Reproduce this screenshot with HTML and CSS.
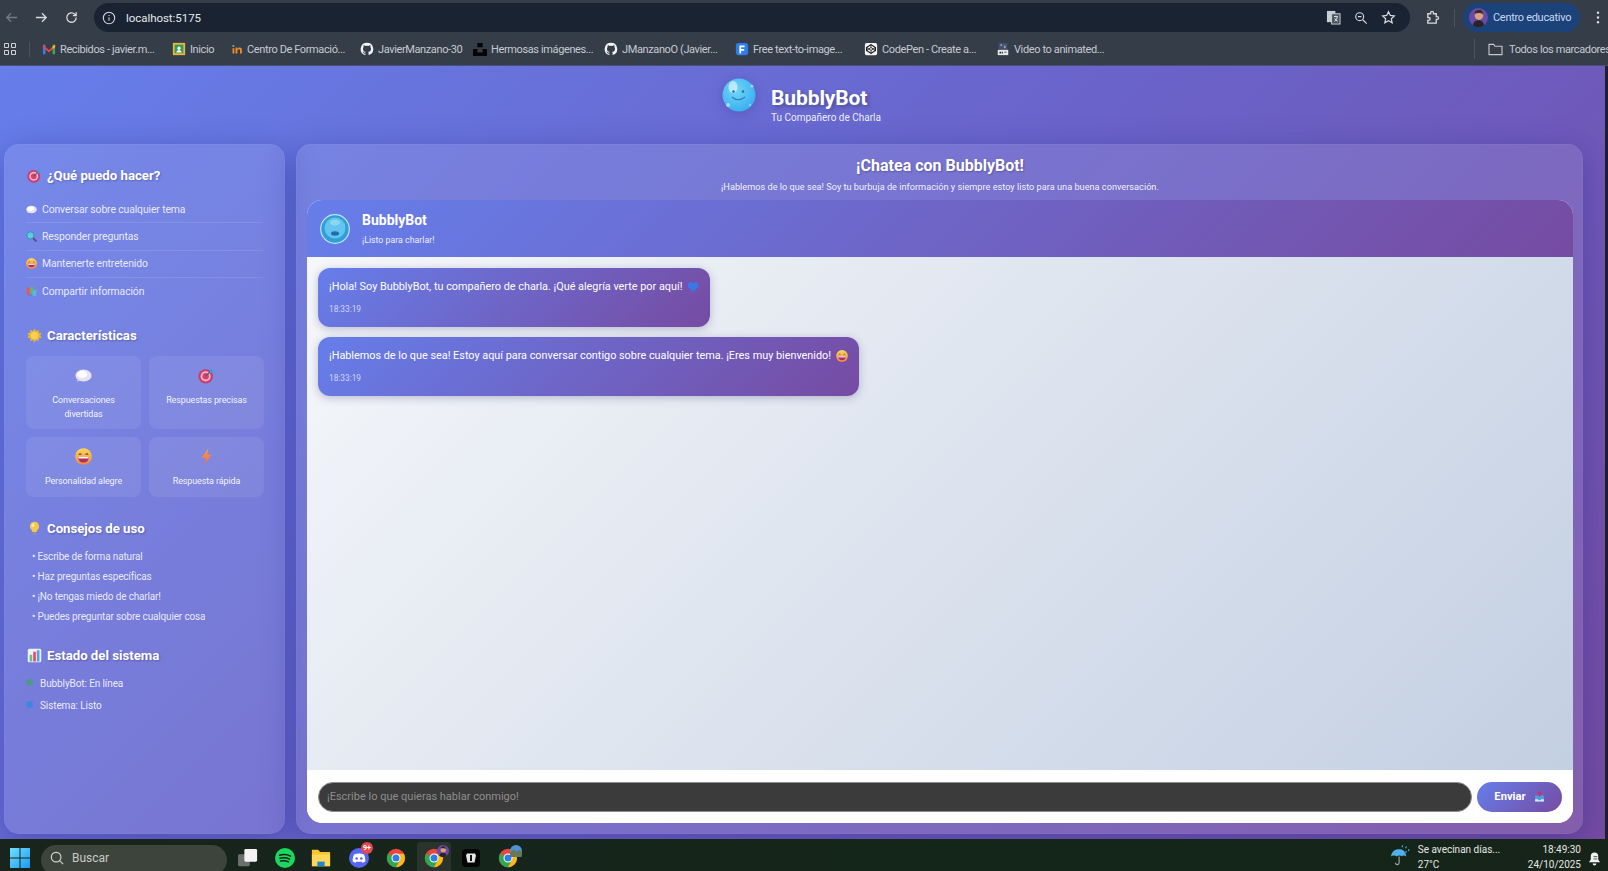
FILE: index.html
```html
<!DOCTYPE html>
<html lang="es">
<head>
<meta charset="utf-8">
<title>BubblyBot</title>
<link rel="stylesheet" href="styles.css">
</head>
<body>
<svg class="defs" width="0" height="0" aria-hidden="true">
  <defs>
    <radialGradient id="gBubble" cx="40%" cy="35%" r="70%"><stop offset="0" stop-color="#74d6f7"/><stop offset="1" stop-color="#35aef0"/></radialGradient>
    <linearGradient id="gFace" x1="0" y1="0" x2="0" y2="1"><stop offset="0" stop-color="#fbd75a"/><stop offset="1" stop-color="#f08a3c"/></linearGradient>
    <linearGradient id="gBolt" x1="0" y1="0" x2="0" y2="1"><stop offset="0" stop-color="#f9a04a"/><stop offset="1" stop-color="#ee6a4a"/></linearGradient>
    <linearGradient id="gWin" x1="0" y1="0" x2="1" y2="1"><stop offset="0" stop-color="#6fe0ff"/><stop offset="1" stop-color="#1b9af0"/></linearGradient>
    <symbol id="target" viewBox="0 0 20 20"><circle cx="9" cy="11" r="8.500" fill="#cf3a68"/><circle cx="9" cy="11" r="6" fill="#f0b4c8"/><circle cx="9" cy="11" r="3.800" fill="#d9406c"/><path d="M9 11 16 4" stroke="#35618f" stroke-width="1.400"/><path d="M15 1l1 3 3.500-.2-2.800 3.200-3-.6z" fill="#35a4e8"/></symbol>
    <symbol id="speech" viewBox="0 0 20 20"><ellipse cx="10" cy="10" rx="9.500" ry="7" fill="#e9e1f2"/><ellipse cx="8.500" cy="8.500" rx="6" ry="4" fill="#fff"/><path d="M4 14l-2 3 5-1.500z" fill="#d9d0ea"/></symbol>
    <symbol id="lens" viewBox="0 0 20 20"><path d="M12 12l6 6" stroke="#6b3f80" stroke-width="3.400" stroke-linecap="round"/><circle cx="8" cy="8" r="6.500" fill="#53cfe0" stroke="#3d7fa8" stroke-width="1.400"/></symbol>
    <symbol id="smile" viewBox="0 0 20 20"><circle cx="10" cy="10" r="9.800" fill="url(#gFace)"/><path d="M4.500 8q1.500-2.500 3 0M12.500 8q1.500-2.500 3 0" fill="none" stroke="#6b3a2a" stroke-width="1.200"/><path d="M3.500 10.500h13q-.5 6.500-6.500 6.500t-6.500-6.500z" fill="#b52a6a"/><path d="M4 10.500h12v1.800H4z" fill="#fff"/></symbol>
    <symbol id="books" viewBox="0 0 20 20"><path d="M1 3h8v13H1z" fill="#e0566f"/><path d="M7 2h7v13H7z" fill="#64b56a"/><path d="M12 7h7v11h-7z" fill="#5ab4e0"/><path d="M3 15h8v3H3z" fill="#6b7fd0"/></symbol>
    <symbol id="star" viewBox="0 0 20 20"><path d="M10 .5l2 3.500 3.500-1.500.3 3.700 3.700.8-1.900 3 1.900 3-3.700.8-.3 3.700L12 16l-2 3.500L8 16l-3.500 1.500-.3-3.700-3.700-.8 1.900-3-1.900-3 3.700-.8.3-3.700L8 4z" fill="#e8b23c"/><circle cx="10" cy="10" r="5" fill="#f6d250"/></symbol>
    <symbol id="bulb" viewBox="0 0 20 20"><path d="M10 1a6 6 0 0 0-4 10.500c1 1 1.300 2 1.300 3h5.400c0-1 .3-2 1.300-3A6 6 0 0 0 10 1z" fill="#f7c84a"/><path d="M7.500 15h5v2.500a1 1 0 0 1-1 1h-3a1 1 0 0 1-1-1z" fill="#8d8fa8"/><ellipse cx="8" cy="5.500" rx="2" ry="2.500" fill="#fde9a0"/></symbol>
    <symbol id="chart" viewBox="0 0 20 20"><rect x="1" y="1" width="18" height="18" rx="2" fill="#eef1f7"/><rect x="3.500" y="9" width="3.500" height="9" fill="#63c77a"/><rect x="8.300" y="5" width="3.500" height="13" fill="#e8476f"/><rect x="13.100" y="3" width="3.500" height="15" fill="#4aa3e8"/></symbol>
    <symbol id="bolt" viewBox="0 0 20 20"><path d="M12 .5 4 11.500h5L7.500 19.500 16 8h-5z" fill="url(#gBolt)"/></symbol>
    <symbol id="heart" viewBox="0 0 20 20"><path d="M10 18C4 13.500 1 10.500 1 6.800 1 3.800 3.300 2 5.700 2 7.500 2 9 3 10 4.500 11 3 12.500 2 14.300 2 16.700 2 19 3.800 19 6.800c0 3.700-3 6.700-9 11.200z" fill="#3a78e6"/></symbol>
    <symbol id="outbox" viewBox="0 0 20 20"><path d="M2 8h16v11H2z" fill="#4f9fe0"/><path d="M2 15h5l1 2h4l1-2h5v4H2z" fill="#dfe8f4"/><path d="M10 0l4.500 4.500h-3V10h-3V4.500h-3z" fill="#d9285f"/></symbol>
    <symbol id="ghub" viewBox="0 0 20 20"><path fill="#f2f4f7" d="M10 1a9 9 0 0 0-2.850 17.540c.45.08.62-.2.62-.43v-1.600c-2.500.55-3.030-1.200-3.030-1.200-.41-1.040-1-1.320-1-1.320-.82-.56.06-.55.06-.55.9.06 1.380.93 1.380.93.8 1.380 2.100.98 2.620.75.08-.58.31-.98.570-1.200-2-.23-4.100-1-4.100-4.450 0-.98.35-1.780.93-2.410-.1-.23-.4-1.150.08-2.380 0 0 .76-.24 2.480.92a8.600 8.600 0 0 1 4.500 0c1.720-1.160 2.480-.92 2.480-.92.49 1.230.18 2.150.09 2.380.58.630.92 1.430.92 2.410 0 3.460-2.100 4.220-4.110 4.440.32.280.61.830.61 1.670v2.480c0 .24.160.520.620.430A9 9 0 0 0 10 1z"/></symbol>
    <symbol id="chrome" viewBox="0 0 24 24"><circle cx="12" cy="12" r="11" fill="#e8453c"/><path d="M12 12 2.500 6.500A11 11 0 0 0 12 23l5.500-9.500z" fill="#2fa84f"/><path d="M12 7h9.500A11 11 0 0 1 12 23l5-9z" fill="#f9bc15"/><circle cx="12" cy="12" r="5.400" fill="#fff"/><circle cx="12" cy="12" r="4.200" fill="#2f7de8"/></symbol>
    <symbol id="avatar" viewBox="0 0 20 20"><circle cx="10" cy="10" r="10" fill="#6c49a8"/><circle cx="10.500" cy="8" r="4.500" fill="#d9a27e"/><path d="M6 6c0-3 2.500-4 5-4s4 2 3.500 5C13 5 9 5 6 6z" fill="#3a2a22"/><path d="M4 18c1-4 4-5 6-5s5 1 6 5a10 10 0 0 1-12 0z" fill="#2a2326"/></symbol>
  </defs>
</svg>

<header class="toolbar">
  <svg class="tb-icon dim" viewBox="0 0 16 16"><path d="M14 8H3M7.500 3.500 3 8l4.500 4.500"/></svg>
  <svg class="tb-icon" viewBox="0 0 16 16"><path d="M2 8h11M8.500 3.500 13 8l-4.500 4.500"/></svg>
  <svg class="tb-icon" viewBox="0 0 16 16"><path d="M13 8a5 5 0 1 1-1.500-3.500L13 6M13 2.500V6H9.500"/></svg>
  <div class="omnibox">
    <svg class="info" viewBox="0 0 16 16"><circle cx="8" cy="8" r="6.500"/><path d="M8 7.200v4M8 4.500v1.200"/></svg>
    <span class="url">localhost:5175</span>
    <svg class="translate" viewBox="0 0 16 16"><rect x="1" y="1" width="9" height="12" fill="#c9ced6"/><rect x="6" y="4" width="9" height="11" fill="#4b535e" stroke="#c9ced6"/><path d="M8.500 7h4M10.500 6v1M9 12c2-1 3-3 3-5M9.500 9c.5 1.500 1.500 2.500 3 3" stroke="#e5e8ec" fill="none"/></svg>
    <svg class="omni-icon" viewBox="0 0 16 16"><circle cx="6.500" cy="6.500" r="4.500"/><path d="M10 10l4.500 4.500M4.500 6.500h4"/></svg>
    <svg class="omni-icon star-outline" viewBox="0 0 16 16"><path d="M8 1.800l1.900 4 4.300.5-3.200 3 .9 4.300L8 11.500l-3.900 2.100.9-4.300-3.200-3 4.300-.5z"/></svg>
  </div>
  <svg class="tb-icon ext" viewBox="0 0 16 16"><path d="M3 4h3V3a1.500 1.500 0 0 1 3 0v1h3v3h1a1.500 1.500 0 0 1 0 3h-1v4H3v-3h1a1.500 1.500 0 0 0 0-3H3z"/></svg>
  <span class="tb-sep"></span>
  <div class="profile"><svg class="profile-pic"><use href="#avatar"/></svg><span>Centro educativo</span></div>
  <svg class="dots" viewBox="0 0 4 16"><circle cx="2" cy="3" r="1.300"/><circle cx="2" cy="8" r="1.300"/><circle cx="2" cy="13" r="1.300"/></svg>
</header>

<nav class="bookmarks">
  <svg class="apps" viewBox="0 0 12 12"><path d="M.5.500h4v4h-4zM7.500.500h4v4h-4zM.5 7.500h4v4h-4zM7.500 7.500h4v4h-4z"/></svg>
  <span class="bm-sep"></span>
  <a class="bm bm-1"><svg class="bm-icon" viewBox="0 0 16 16"><path d="M1 3h3v11H1z" fill="#3a7de8"/><path d="M12 3h3v11h-3z" fill="#34a853"/><path d="M1 3l7 6 7-6v3L8 12 1 6z" fill="#e8453c"/><path d="M12 5l3-2v3l-3 2z" fill="#f9bc15"/></svg>Recibidos - javier.m...</a>
  <a class="bm bm-2"><svg class="bm-icon" viewBox="0 0 16 16"><rect x="1" y="1" width="14" height="14" fill="#f2b632"/><rect x="3" y="3" width="10" height="10" fill="#2f9e5a"/><circle cx="8" cy="7" r="1.800" fill="#fff"/><path d="M5 12c0-2 1.500-3 3-3s3 1 3 3z" fill="#fff"/></svg>Inicio</a>
  <a class="bm bm-3"><svg class="bm-icon small" viewBox="0 0 16 16"><path d="M2 7h2.500v7H2z" fill="#f08a24"/><path d="M6 14V6h2.500v2c2-3 6-2.500 6 1v5H12V9.500c0-2-3.500-1.500-3.500 1V14z" fill="#f08a24"/><circle cx="3.200" cy="4" r="1.400" fill="#9aa3ad"/></svg>Centro De Formació...</a>
  <a class="bm bm-4"><svg class="bm-icon"><use href="#ghub"/></svg>JavierManzano-30</a>
  <a class="bm bm-5"><svg class="bm-icon" viewBox="0 0 16 16"><path d="M5 1h6v5H5zM0 8h5v4h6V8h5v8H0z" fill="#050505"/></svg>Hermosas imágenes...</a>
  <a class="bm bm-6"><svg class="bm-icon"><use href="#ghub"/></svg>JManzanoO (Javier...</a>
  <a class="bm bm-7"><svg class="bm-icon" viewBox="0 0 16 16"><rect x="1" y="1" width="14" height="14" rx="3" fill="#2f7de8"/><path d="M5 4h6v2H7v2h3.500v2H7v3H5z" fill="#fff"/></svg>Free text-to-image...</a>
  <a class="bm bm-8"><svg class="bm-icon" viewBox="0 0 16 16"><rect x="1" y="1" width="14" height="14" rx="2" fill="#f2f2f2"/><path d="M8 3l5 3.300v3.400L8 13 3 9.700V6.300z" fill="none" stroke="#111" stroke-width="1.300"/><path d="M3 6.300 8 9.700l5-3.400M3 9.700l5-3.400 5 3.400M8 3v3.300M8 9.700V13" fill="none" stroke="#111" stroke-width=".9"/></svg>CodePen - Create a...</a>
  <a class="bm bm-9"><svg class="bm-icon" viewBox="0 0 16 16"><rect x="3" y="1" width="10" height="8" fill="#46506a"/><rect x="5" y="2.500" width="2" height="2" fill="#8fa0c0"/><rect x="9" y="4" width="2" height="3" fill="#8fa0c0"/><rect x="2" y="9" width="12" height="6" fill="#e8e8e8"/><path d="M4 11h2v2H4zM7 11h1v2H7zM9.500 11H12v1H9.500z" fill="#222"/></svg>Video to animated...</a>
  <span class="bm-sep all-sep"></span>
  <a class="bm bm-all"><svg class="folder" viewBox="0 0 16 14"><path d="M1 12.500v-11h5l1.500 2h7.500v9z"/></svg>Todos los marcadores</a>
</nav>

<main class="page">
  <header class="brand">
    <svg class="brand-logo" viewBox="0 0 34 34">
      <circle cx="17" cy="17" r="16.500" fill="url(#gBubble)"/>
      <ellipse cx="11" cy="9" rx="4.500" ry="6" fill="#fff" opacity=".55"/>
      <circle cx="30" cy="8" r="1.600" fill="#fff" opacity=".45"/><circle cx="6" cy="27" r="2" fill="#fff" opacity=".5"/><circle cx="28" cy="27" r="1.100" fill="#fff" opacity=".5"/>
      <circle cx="11.500" cy="13.500" r="1.300" fill="#2a6ea8"/><circle cx="21" cy="13.500" r="1.300" fill="#2a6ea8"/>
      <path d="M10 19q6 5.500 13 0" fill="none" stroke="#2a7db8" stroke-width="1.200"/>
    </svg>
    <div class="brand-text">
      <h1>BubblyBot</h1>
      <p>Tu Compañero de Charla</p>
    </div>
  </header>

  <div class="workspace">
    <aside class="sidebar">
      <section class="side-section">
        <h3 class="side-title"><svg class="title-icon"><use href="#target"/></svg>¿Qué puedo hacer?</h3>
        <ul class="abilities">
          <li><svg class="em"><use href="#speech"/></svg>Conversar sobre cualquier tema</li>
          <li><svg class="em"><use href="#lens"/></svg>Responder preguntas</li>
          <li><svg class="em"><use href="#smile"/></svg>Mantenerte entretenido</li>
          <li><svg class="em"><use href="#books"/></svg>Compartir información</li>
        </ul>
      </section>
      <section class="side-section">
        <h3 class="side-title"><svg class="title-icon"><use href="#star"/></svg>Características</h3>
        <div class="features">
          <div class="feature"><svg class="feature-icon"><use href="#speech"/></svg><span>Conversaciones divertidas</span></div>
          <div class="feature"><svg class="feature-icon"><use href="#target"/></svg><span>Respuestas precisas</span></div>
          <div class="feature"><svg class="feature-icon"><use href="#smile"/></svg><span>Personalidad alegre</span></div>
          <div class="feature"><svg class="feature-icon"><use href="#bolt"/></svg><span>Respuesta rápida</span></div>
        </div>
      </section>
      <section class="side-section">
        <h3 class="side-title"><svg class="title-icon"><use href="#bulb"/></svg>Consejos de uso</h3>
        <ul class="tips">
          <li>• Escribe de forma natural</li>
          <li>• Haz preguntas específicas</li>
          <li>• ¡No tengas miedo de charlar!</li>
          <li>• Puedes preguntar sobre cualquier cosa</li>
        </ul>
      </section>
      <section class="side-section">
        <h3 class="side-title"><svg class="title-icon"><use href="#chart"/></svg>Estado del sistema</h3>
        <ul class="status">
          <li><i class="dot dot-green"></i>BubblyBot: En línea</li>
          <li><i class="dot dot-blue"></i>Sistema: Listo</li>
        </ul>
      </section>
    </aside>

    <section class="panel">
      <h2 class="panel-title">¡Chatea con BubblyBot!</h2>
      <p class="panel-sub">¡Hablemos de lo que sea! Soy tu burbuja de información y siempre estoy listo para una buena conversación.</p>
      <div class="chat">
        <div class="chat-head">
          <svg class="chat-avatar" viewBox="0 0 30 30">
            <circle cx="15" cy="15" r="14.300" fill="#2f9fd8" stroke="#bfe6f5" stroke-width="1.200"/>
            <circle cx="15" cy="14" r="10.500" fill="#63c4ee"/>
            <ellipse cx="15" cy="19.500" rx="4" ry="2.200" fill="#1f6fae"/>
            <ellipse cx="15" cy="8.500" rx="5" ry="3" fill="#9fe0f7" opacity=".7"/>
          </svg>
          <div>
            <div class="chat-name">BubblyBot</div>
            <div class="chat-state">¡Listo para charlar!</div>
          </div>
        </div>
        <div class="messages">
          <article class="msg">
            <p>¡Hola! Soy BubblyBot, tu compañero de charla. ¡Qué alegría verte por aquí! <svg class="em-msg"><use href="#heart"/></svg></p>
            <time>18:33:19</time>
          </article>
          <article class="msg">
            <p>¡Hablemos de lo que sea! Estoy aquí para conversar contigo sobre cualquier tema. ¡Eres muy bienvenido! <svg class="em-msg"><use href="#smile"/></svg></p>
            <time>18:33:19</time>
          </article>
        </div>
        <form class="composer">
          <input class="composer-input" type="text" placeholder="¡Escribe lo que quieras hablar conmigo!">
          <button class="send" type="button">Enviar <svg class="send-icon"><use href="#outbox"/></svg></button>
        </form>
      </div>
    </section>
  </div>
</main>

<footer class="taskbar">
  <svg class="win" viewBox="0 0 20 20"><path d="M0 0h9.500v9.500H0zM10.500 0H20v9.500h-9.500zM0 10.500h9.500V20H0zM10.500 10.500H20V20h-9.500z" fill="url(#gWin)"/></svg>
  <div class="search"><svg class="search-icon" viewBox="0 0 16 16"><circle cx="7" cy="7" r="5.500"/><path d="M11 11l4 4"/></svg><span>Buscar</span></div>
  <svg class="task task-view" viewBox="0 0 22 22"><rect x="0" y="7" width="13" height="13" rx="1.500" fill="#6d6f6f"/><rect x="7" y="1" width="14" height="14" rx="1.500" fill="#f3f3f3"/></svg>
  <svg class="task spotify" viewBox="0 0 20 20"><circle cx="10" cy="10" r="10" fill="#1ed760"/><path d="M4.500 7.200c4-1 8-.7 11 .9M5 10.200c3.500-.8 7-.5 9.500.9M5.500 13c3-.6 5.700-.4 8 .8" fill="none" stroke="#10231a" stroke-width="1.500" stroke-linecap="round"/></svg>
  <svg class="task folder-app" viewBox="0 0 22 20"><path d="M1 1h7l2 2.500h11V19H1z" fill="#f5c430"/><path d="M1 6h20v13H1z" fill="#fcd75a"/><path d="M7 14h8v5H7z" fill="#1b86d8"/></svg>
  <div class="task-wrap"><svg class="task discord" viewBox="0 0 20 20"><circle cx="10" cy="10" r="10" fill="#5865f2"/><path d="M5 6.500c3-1.300 7-1.300 10 0 1 2.300 1.500 4.500 1.300 7-1 .7-2 1.100-3 1.300l-.8-1.300c-2 .5-3 .5-5 0l-.8 1.300c-1-.2-2-.6-3-1.300C3.500 11 4 8.800 5 6.500z" fill="#fff"/><circle cx="7.700" cy="10.500" r="1.300" fill="#5865f2"/><circle cx="12.300" cy="10.500" r="1.300" fill="#5865f2"/></svg><span class="badge">9+</span></div>
  <svg class="task chrome-app first"><use href="#chrome"/></svg>
  <div class="task-active"><svg class="task chrome-app"><use href="#chrome"/></svg><svg class="mini-avatar"><use href="#avatar"/></svg></div>
  <svg class="task black-app" viewBox="0 0 20 20"><rect x="1" y="1" width="18" height="18" rx="4" fill="#050505"/><path d="M6 5.500h8l1 2-1.500 7h-7L5 7.500z" fill="#e6e6e6"/><path d="M9 7h2v6H9z" fill="#111"/></svg>
  <div class="task-wrap last"><svg class="task chrome-app"><use href="#chrome"/></svg><svg class="mini-avatar scenic" viewBox="0 0 20 20"><circle cx="10" cy="10" r="10" fill="#4e93d6"/><path d="M0 12l6-5 5 4 4-3 5 4v4a10 10 0 0 1-20 0z" fill="#69785c"/></svg></div>
  <div class="tray">
    <svg class="umbrella" viewBox="0 0 22 24"><path d="M1 13C2 7 6 5 10 5s7 2 8 8c-2-1.500-4-1.500-5 0-1-1.500-4-1.500-6 0-1-1.500-4-1.500-6 0z" fill="#4fb0ec"/><path d="M10 13v7a2 2 0 0 1-4 0" fill="none" stroke="#a8adab" stroke-width="1.200"/><path d="M14 1l-.8 2M18 2l-.8 2M21 5l-.8 2M18 7l-.8 2" stroke="#4fb0ec" stroke-width="1.200"/></svg>
    <div class="weather"><span>Se avecinan días...</span><span>27°C</span></div>
    <div class="clock"><span>18:49:30</span><span>24/10/2025</span></div>
    <svg class="bell" viewBox="0 0 14 16"><path d="M7 1.500a4 4 0 0 0-4 4V9L1 12h12l-2-3V5.500a4 4 0 0 0-4-4z" fill="#f1f1f1"/><path d="M5 13.500a2 2 0 0 0 4 0z" fill="#f1f1f1"/><path d="M6 6h4M6 8.500h4" stroke="#222" stroke-width=".8"/></svg>
  </div>
</footer>
</body>
</html>
```

FILE: styles.css
```css
* { box-sizing: border-box; }
html, body { margin: 0; padding: 0; overflow: hidden; }
body {
  width: 1608px;
  height: 871px;
  background: #1d2026;
  font-family: Roboto, "Noto Sans", sans-serif;
  display: flex;
  flex-direction: column;
}
.defs { position: absolute; }
h1, h2, h3, p, ul { margin: 0; padding: 0; }
ul { list-style: none; }

/* Browser toolbar */
.toolbar {
  height: 33px;
  background: #353d49;
  display: flex;
  align-items: center;
  padding: 2px 0 0 4px;
  flex: none;
}
.tb-icon {
  width: 15px; height: 15px;
  margin-right: 15px;
  fill: none;
  stroke: #d7dbe0;
  stroke-width: 1.400;
}
.tb-icon.dim { stroke: #747b86; }
.omnibox {
  width: 1316px;
  height: 29px;
  margin-right: 15px;
  background: #1a2331;
  border-radius: 15px;
  display: flex;
  align-items: center;
  padding: 0 14px 0 8px;
  color: #e6e9ee;
}
.info { width: 14px; height: 14px; fill: none; stroke: #d5d9df; stroke-width: 1.200; margin-right: 10px; }
.url { font: 11.500px Roboto, sans-serif; letter-spacing: -.05px; color: #e6e9ee; flex: 1; }
.translate { width: 15px; height: 15px; margin-right: 13px; }
.omni-icon { width: 14px; height: 14px; fill: none; stroke: #d5d9df; stroke-width: 1.300; margin-right: 13px; }
.star-outline { margin-right: 0; width: 15px; height: 15px; }
.tb-icon.ext { margin: 0 14px 0 0; }
.tb-sep { width: 1px; height: 18px; background: #4b535f; margin-right: 8px; }
.profile {
  width: 117px;
  height: 29px;
  background: #1b4279;
  border-radius: 15px;
  display: flex;
  align-items: center;
  padding-left: 6px;
  font: 11px Roboto, sans-serif;
  letter-spacing: -.3px;
  color: #c6d8f4;
}
.profile-pic { width: 19px; height: 19px; margin-right: 5px; }
.dots { width: 4px; height: 15px; margin-left: 16px; fill: #d7dbe0; }

/* Bookmarks bar */
.bookmarks {
  height: 33px;
  background: #353d49;
  display: flex;
  align-items: center;
  padding-left: 4px;
  flex: none;
  border-bottom: 1px solid #4b4f78;
}
.apps { width: 12px; height: 12px; fill: none; stroke: #d0d4da; margin-right: 13px; flex: none; }
.bm-sep { width: 1px; height: 15px; background: #4b535f; margin-right: 12px; flex: none; }
.all-sep { height: 20px; margin-right: 13px; }
.bm {
  display: flex;
  align-items: center;
  font: 11px Roboto, sans-serif;
  letter-spacing: -.38px;
  color: #c5cad1;
  white-space: nowrap;
  flex: none;
}
.bm-icon { width: 14px; height: 14px; margin-right: 4px; flex: none; }
.bm-icon.small { width: 12px; height: 12px; }
.bm-1 { width: 130px; }
.bm-2 { width: 59px; }
.bm-3 { width: 129px; }
.bm-4 { width: 113px; }
.bm-5 { width: 131px; }
.bm-6 { width: 131px; }
.bm-7 { width: 129px; }
.bm-8 { width: 132px; }
.bm-9 { width: 478px; }
.folder { width: 15px; height: 13px; fill: none; stroke: #c5cad1; stroke-width: 1.200; margin-right: 6px; }

/* Page */
.page {
  width: 1605px;
  height: 773px;
  flex: none;
  background: linear-gradient(135deg, #667eea 0%, #6a62c8 50%, #764ba2 100%);
  padding: 0 22px 5px 4px;
  display: flex;
  flex-direction: column;
  color: #fff;
}
.brand {
  height: 78px;
  flex: none;
  display: flex;
  justify-content: center;
  align-items: flex-start;
  padding-left: 16px;
  padding-top: 12px;
}
.brand-logo { width: 34px; height: 34px; margin-right: 15px; filter: drop-shadow(0 2px 6px rgba(60,40,140,.3)); }
.brand-text { padding-top: 7px; }
.brand h1 { font-size: 21px; line-height: 26px; font-weight: 700; letter-spacing: -.1px; text-shadow: 2px 2px 4px rgba(0,0,0,.3); }
.brand p { font-size: 10px; line-height: 13px; color: rgba(255,255,255,.9); }

.workspace { flex: 1; display: flex; gap: 11px; min-height: 0; }
.sidebar {
  width: 281px;
  flex: none;
  padding: 20px 21px 0;
  border-radius: 15px;
  background: rgba(255,255,255,.1);
  box-shadow: 0 8px 32px rgba(31,38,135,.37);
  border: 1px solid rgba(255,255,255,.04);
}
.side-section { margin-bottom: 20px; }
.side-title {
  display: flex;
  align-items: center;
  height: 20px;
  font-size: 13.200px;
  font-weight: 700;
  text-shadow: 1px 1px 2px rgba(0,0,0,.25);
  padding-left: 1px;
}
.title-icon { width: 15px; height: 15px; margin-right: 5px; flex: none; }
.abilities { margin-top: 11px; }
.abilities li {
  height: 27.300px;
  display: flex;
  align-items: center;
  font-size: 10.400px;
  letter-spacing: -.12px;
  color: rgba(255,255,255,.85);
  border-bottom: 1px solid rgba(255,255,255,.1);
}
.abilities li:last-child { border-bottom: none; }
.em { width: 11px; height: 11px; margin-right: 5px; flex: none; }
.features { margin: 11px 0 21px; display: grid; grid-template-columns: 115px 115px; grid-template-rows: 73px 60px; gap: 8px; }
.feature {
  background: rgba(255,255,255,.08);
  border-radius: 8px;
  display: flex;
  flex-direction: column;
  align-items: center;
  text-align: center;
  padding: 11px 8px 0;
  font-size: 9px;
  line-height: 14px;
  letter-spacing: -.12px;
  color: rgba(255,255,255,.92);
}
.feature-icon { width: 17px; height: 17px; margin-bottom: 9px; flex: none; }
.tips { margin: 9px 0 -2px; }
.tips li {
  height: 20px;
  line-height: 20px;
  padding-left: 6px;
  font-size: 10px;
  letter-spacing: -.16px;
  color: rgba(255,255,255,.85);
}
.status { margin-top: 7px; }
.status li {
  height: 22px;
  display: flex;
  align-items: center;
  font-size: 10px;
  letter-spacing: -.1px;
  color: rgba(255,255,255,.88);
}
.dot { width: 7px; height: 7px; border-radius: 50%; margin-right: 7px; flex: none; position: relative; top: -1px; }
.dot-green { background: #4d9a86; }
.dot-blue { background: #3f86e0; }

.panel {
  flex: 1;
  min-width: 0;
  display: flex;
  flex-direction: column;
  padding: 10px 9px 10px 10px;
  border-radius: 15px;
  background: rgba(255,255,255,.1);
  box-shadow: 0 8px 32px rgba(31,38,135,.37);
  border: 1px solid rgba(255,255,255,.04);
  text-align: center;
}
.panel-title { font-size: 16px; line-height: 22px; font-weight: 700; text-shadow: 1px 1px 2px rgba(0,0,0,.25); }
.panel-sub { font-size: 9.200px; line-height: 14px; margin: 3px 0 6px; color: rgba(255,255,255,.92); }
.chat {
  flex: 1;
  min-height: 0;
  display: flex;
  flex-direction: column;
  border-radius: 15px;
  overflow: hidden;
  background: #fff;
  text-align: left;
}
.chat-head {
  height: 57px;
  flex: none;
  display: flex;
  align-items: center;
  padding: 0 13px;
  background: linear-gradient(135deg, #667eea, #764ba2);
}
.chat-avatar { width: 30px; height: 30px; margin-right: 12px; flex: none; }
.chat-name { font-size: 14px; line-height: 18px; font-weight: 700; margin-top: -1px; }
.chat-state { font-size: 8.800px; line-height: 12px; margin-top: 5px; color: rgba(255,255,255,.9); }
.messages {
  flex: 1;
  min-height: 0;
  background: linear-gradient(135deg, #f5f7fa 0%, #c3cfe2 100%);
  padding: 11px;
  display: flex;
  flex-direction: column;
  align-items: flex-start;
  gap: 10px;
}
.msg {
  width: fit-content;
  height: 59px;
  padding: 8px 11px 0;
  border-radius: 12px;
  color: #fff;
  background: linear-gradient(135deg, #667eea, #764ba2);
  box-shadow: 0 2px 8px rgba(60,60,120,.3);
}
.msg p { font-size: 10.850px; line-height: 21px; white-space: nowrap; display: flex; align-items: center; gap: 5px; }
.msg time { display: block; font-size: 8.300px; line-height: 12px; margin-top: 6px; color: rgba(255,255,255,.7); }
.em-msg { width: 12px; height: 12px; flex: none; }
.composer {
  height: 53px;
  flex: none;
  background: #fff;
  display: flex;
  align-items: center;
  gap: 5px;
  padding: 0 11px;
}
.composer-input {
  flex: 1;
  min-width: 0;
  height: 30px;
  border-radius: 15px;
  border: 1px solid #8e8e8e;
  background: #3b3b3b;
  padding: 0 8px;
  font: 11px Roboto, sans-serif;
  color: #eee;
  outline: none;
}
.composer-input::placeholder { color: #8d8d8d; opacity: 1; }
.send {
  width: 85px;
  height: 30px;
  flex: none;
  border: none;
  border-radius: 15px;
  background: linear-gradient(135deg, #667eea, #764ba2);
  color: #fff;
  font: 700 11.200px Roboto, sans-serif;
  display: flex;
  align-items: center;
  justify-content: center;
  gap: 8px;
  padding: 0;
}
.send-icon { width: 11px; height: 11px; }

/* Taskbar */
.taskbar {
  height: 32px;
  flex: none;
  width: 100%;
  background: linear-gradient(90deg, #18241c, #14261a 70%, #162318);
  display: flex;
  align-items: flex-start;
  padding: 9px 0 0 10px;
  overflow: hidden;
}
.win { width: 20px; height: 20px; margin-right: 11px; flex: none; }
.search {
  width: 186px;
  height: 30px;
  margin-top: -3px;
  margin-right: 11px;
  background: #3c443c;
  border-radius: 15px;
  display: flex;
  align-items: center;
  padding: 0 0 0 9px;
  flex: none;
  font: 12px Roboto, sans-serif;
  color: #c8ccc8;
}
.search-icon { width: 14px; height: 14px; fill: none; stroke: #d5d8d5; stroke-width: 1.300; margin-right: 8px; margin-bottom: 5px; }
.search span { margin-bottom: 5px; }
.task { width: 20px; height: 20px; flex: none; }
.task-view { margin-right: 17px; }
.spotify { margin-right: 16px; }
.folder-app { margin-right: 18px; }
.task-wrap { position: relative; width: 20px; height: 20px; flex: none; margin-right: 17px; }
.badge {
  position: absolute;
  top: -6px;
  right: -4px;
  width: 12px;
  height: 12px;
  border-radius: 50%;
  background: #e5484d;
  font: 700 7px/12px Roboto, sans-serif;
  text-align: center;
  color: #fff;
}
.chrome-app { display: block; }
.chrome-app.first { margin-right: 11px; }
.task-active {
  position: relative;
  width: 34px;
  height: 32px;
  flex: none;
  margin-top: -6px;
  margin-right: 10px;
  padding: 6px 0 0 7px;
  background: #2a342c;
  border-radius: 4px;
}
.mini-avatar { position: absolute; top: 3px; right: 2px; width: 12px; height: 12px; }
.black-app { margin-right: 17px; }
.task-wrap.last { margin-right: 0; }
.mini-avatar.scenic { top: -3px; right: -4px; }
.tray {
  margin-left: auto;
  display: flex;
  align-items: flex-start;
  margin-top: -6px;
  color: #e5e7e5;
  font: 10px/15px Roboto, sans-serif;
}
.umbrella { width: 20px; height: 23px; margin-right: 8px; margin-top: 2px; }
.weather { display: flex; flex-direction: column; width: 110px; }
.clock { display: flex; flex-direction: column; align-items: flex-end; margin-right: 7px; }
.bell { width: 13px; height: 15px; margin: 9px 7px 0 0; }
```
